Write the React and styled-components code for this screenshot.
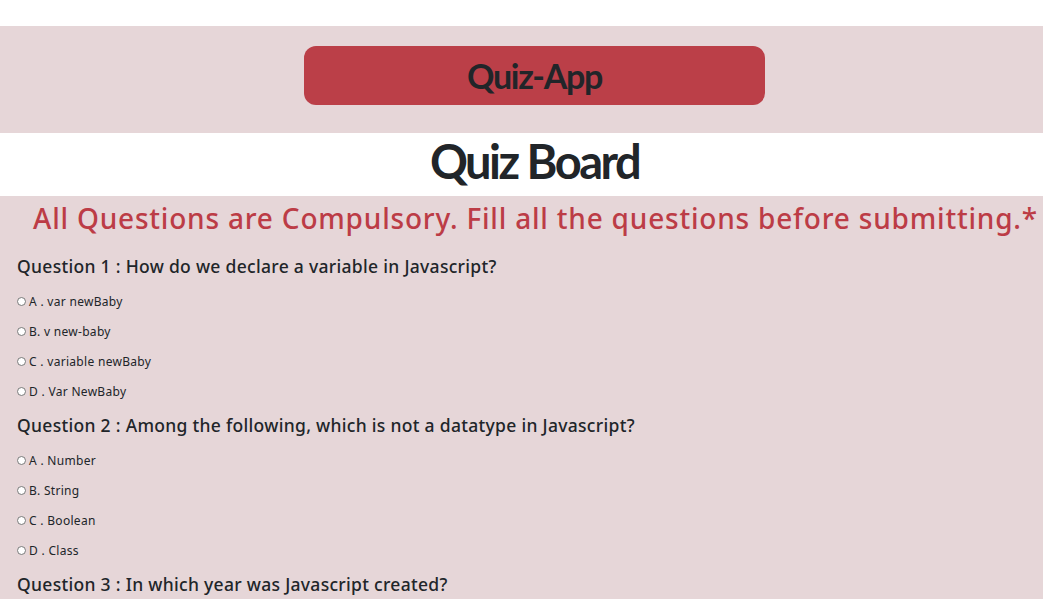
import React from "react";
import styled, { createGlobalStyle } from "styled-components";

const GlobalStyle = createGlobalStyle`
  body {
    margin: 0;
    background: #ffffff;
    color: #212529;
    font-family: "Noto Sans", "DejaVu Sans", sans-serif;
    overflow: hidden;
  }
`;

const Header = styled.header`
  margin-top: 26px;
  height: 107px;
  box-sizing: border-box;
  background: #e6d6d8;
  display: flex;
  justify-content: center;
  padding: 20px 0 0 26px;
`;

const Brand = styled.div`
  width: 461px;
  height: 59px;
  border-radius: 12px;
  background: #bb3f48;
  display: flex;
  align-items: center;
  justify-content: center;
  font-family: "Lato", sans-serif;
  font-weight: 700;
  font-size: 34px;
  letter-spacing: -1.3px;
  color: #212529;
`;

const Board = styled.h1`
  margin: 0;
  height: 63px;
  display: flex;
  align-items: center;
  justify-content: center;
  padding: 0 0 8px 26px;
  box-sizing: border-box;
  font-family: "Lato", sans-serif;
  font-weight: 700;
  font-size: 47px;
  letter-spacing: -2.5px;
  color: #212529;
`;

const Main = styled.main`
  background: #e6d6d8;
  min-height: 403px;
  padding: 3px 0 0 17px;
`;

const Warning = styled.h2`
  margin: 0 0 17px;
  padding-left: 16px;
  white-space: nowrap;
  font-weight: 500;
  font-size: 28px;
  letter-spacing: 0.8px;
  color: #bc3c46;
`;

const Question = styled.h3`
  margin: 0 0 15px;
  font-weight: 500;
  font-size: 17.5px;
  letter-spacing: 0.3px;
  color: #212529;
`;

const Options = styled.div`
  display: flex;
  flex-direction: column;
  gap: 13px;
  margin-bottom: 13px;
`;

const Option = styled.label`
  display: flex;
  align-items: center;
  gap: 3px;
  height: 17px;
  font-size: 12px;
  letter-spacing: 0.3px;
  color: #212529;
`;

const Radio = styled.input`
  margin: 0;
  width: 9px;
  height: 9px;
`;

const questions = [
  {
    text: "Question 1 : How do we declare a variable in Javascript?",
    options: ["A . var newBaby", "B. v new-baby", "C . variable newBaby", "D . Var NewBaby"],
  },
  {
    text: "Question 2 : Among the following, which is not a datatype in Javascript?",
    options: ["A . Number", "B. String", "C . Boolean", "D . Class"],
  },
  {
    text: "Question 3 : In which year was Javascript created?",
    options: ["A . 1995", "B. 1999", "C . 2000", "D . 1990"],
  },
];

export default function App() {
  return (
    <>
      <GlobalStyle />
      <Header>
        <Brand>Quiz-App</Brand>
      </Header>
      <Board>Quiz Board</Board>
      <Main>
        <Warning>All Questions are Compulsory. Fill all the questions before submitting.*</Warning>
        {questions.map((q, i) => (
          <div key={i}>
            <Question>{q.text}</Question>
            <Options>
              {q.options.map((o) => (
                <Option key={o}>
                  <Radio type="radio" name={"q" + i} />
                  {o}
                </Option>
              ))}
            </Options>
          </div>
        ))}
      </Main>
    </>
  );
}
